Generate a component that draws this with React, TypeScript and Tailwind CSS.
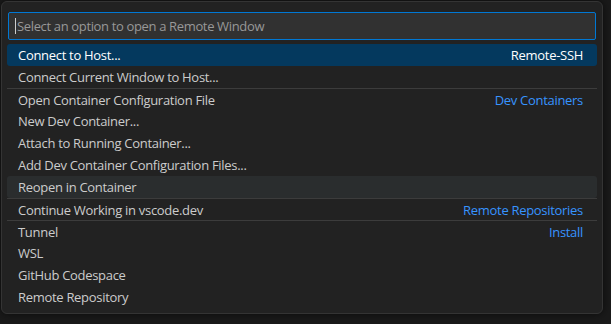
import React from "react";

type Row = {
  label: string;
  desc?: string;
  sep?: boolean;
  selected?: boolean;
  hover?: boolean;
};

const rows: Row[] = [
  { label: "Connect to Host...", desc: "Remote-SSH", selected: true },
  { label: "Connect Current Window to Host..." },
  { label: "Open Container Configuration File", desc: "Dev Containers", sep: true },
  { label: "New Dev Container..." },
  { label: "Attach to Running Container..." },
  { label: "Add Dev Container Configuration Files..." },
  { label: "Reopen in Container", hover: true },
  { label: "Continue Working in vscode.dev", desc: "Remote Repositories", sep: true },
  { label: "Tunnel", desc: "Install", sep: true },
  { label: "WSL" },
  { label: "GitHub Codespace" },
  { label: "Remote Repository" },
];

export default function App() {
  return (
    <div
      className="w-[611px] h-[324px] bg-[#1a1a1a] overflow-hidden relative"
      style={{ fontFamily: '"Open Sans", "Noto Sans", sans-serif' }}
    >
      <div className="ml-[1px] mt-[1px] w-[602px] h-[313px] bg-[#222222] border border-[#343434] rounded-[6px] shadow-[0_0_8px_rgba(0,0,0,0.6)] pt-[10px]">
        <div className="mx-[6px] h-[28px] bg-[#313131] border border-[#0078d4] rounded-[2px] flex items-center pl-[6px]">
          <div className="w-px h-[16px] bg-[#cccccc]" />
          <span className="text-[13px] text-[#989898] ml-[1px] leading-none tracking-[-0.35px]">
            Select an option to open a Remote Window
          </span>
        </div>
        <div className="mt-[4px] px-[5px]">
          {rows.map((r, i) => (
            <div
              key={i}
              className={
                "h-[22px] flex items-center justify-between pl-[11px] pr-[14px] text-[13px] tracking-[-0.3px] " +
                (r.selected
                  ? "bg-[#04395e] rounded-[3px] text-white"
                  : r.hover
                  ? "bg-[#2a2d2e] rounded-[3px] text-[#cccccc]"
                  : "text-[#cccccc]") +
                (r.sep ? " border-t border-[#3c3c3c]" : "")
              }
            >
              <span className="pt-[2px]">{r.label}</span>
              {r.desc && (
                <span className={"pt-[2px] " + (r.selected ? "text-white" : "text-[#3794ff]")}>{r.desc}</span>
              )}
            </div>
          ))}
        </div>
      </div>
    </div>
  );
}
